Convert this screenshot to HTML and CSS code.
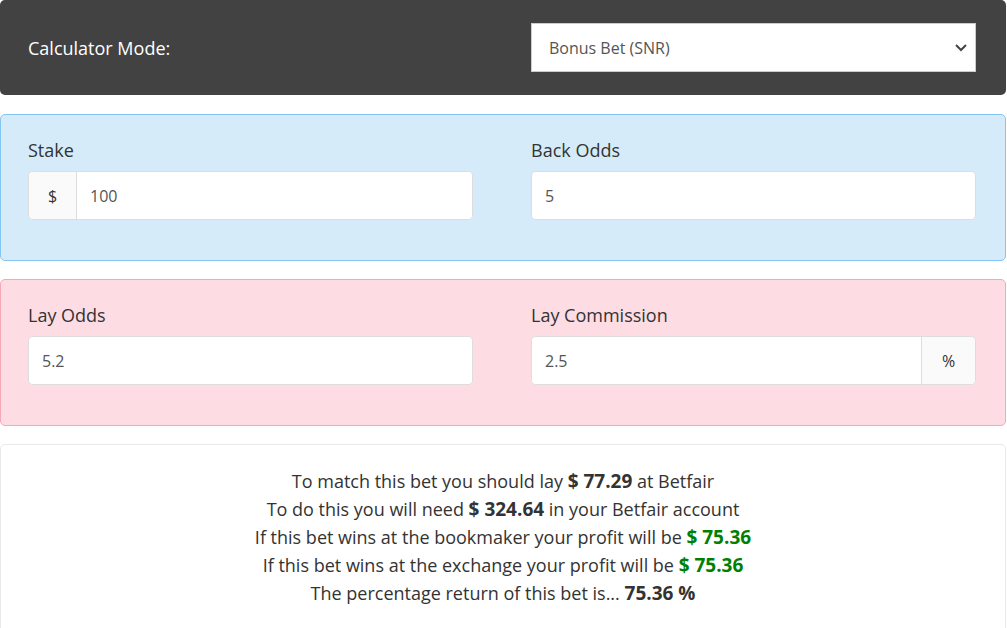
FILE: index.html
```html
<!DOCTYPE html>
<html lang="en">
<head>
  <meta charset="UTF-8">
  <meta name="viewport" content="width=device-width, initial-scale=1.0">
  <title>Matched Betting Calculator</title>
  <link rel="stylesheet" href="styles.css">
</head>
<body>
  <div class="panel mode">
    <label class="mode-label" for="mode">Calculator Mode:</label>
    <div class="select-wrap">
      <select id="mode">
        <option>Bonus Bet (SNR)</option>
        <option>Normal Bet</option>
        <option>Bonus Bet (SR)</option>
      </select>
      <svg class="chevron" width="14" height="9" viewBox="0 0 14 9"><path d="M2 2l5 5 5-5" fill="none" stroke="#444" stroke-width="2"/></svg>
    </div>
  </div>

  <div class="panel back">
    <div class="field">
      <label>Stake</label>
      <div class="group">
        <span class="addon">$</span>
        <input type="text" value="100">
      </div>
    </div>
    <div class="field">
      <label>Back Odds</label>
      <div class="group">
        <input type="text" value="5">
      </div>
    </div>
  </div>

  <div class="panel lay">
    <div class="field">
      <label>Lay Odds</label>
      <div class="group">
        <input type="text" value="5.2">
      </div>
    </div>
    <div class="field">
      <label>Lay Commission</label>
      <div class="group">
        <input type="text" value="2.5">
        <span class="addon">%</span>
      </div>
    </div>
  </div>

  <div class="result">
    <p>To match this bet you should lay <b>$ 77.29</b> at Betfair</p>
    <p>To do this you will need <b>$ 324.64</b> in your Betfair account</p>
    <p>If this bet wins at the bookmaker your profit will be <b class="win">$ 75.36</b></p>
    <p>If this bet wins at the exchange your profit will be <b class="win">$ 75.36</b></p>
    <p>The percentage return of this bet is... <b>75.36 %</b></p>
  </div>
</body>
</html>
```

FILE: styles.css
```css
* { box-sizing: border-box; }

body {
  margin: 0;
  width: 1006px;
  font-family: "Open Sans", Arial, sans-serif;
  font-size: 18px;
  color: #333;
  background: #fff;
}

.panel {
  display: grid;
  grid-template-columns: 1fr 1fr;
  column-gap: 58px;
  padding: 21px 29px 40px 27px;
  border-radius: 5px;
  border: 1px solid transparent;
  margin-bottom: 18px;
}

.mode {
  background: #424242;
  border: none;
  padding: 23px 30px 23px 28px;
  margin-bottom: 19px;
  align-items: center;
}

.mode-label {
  color: #fff;
  font-size: 18px;
}

.select-wrap {
  position: relative;
}

select {
  display: block;
  width: 100%;
  height: 49px;
  padding: 0 40px 0 17px;
  border: 1px solid #ccc;
  border-radius: 0;
  background: #fff;
  appearance: none;
  font-family: inherit;
  font-size: 16px;
  color: #555;
}

.chevron {
  position: absolute;
  right: 8px;
  top: 20px;
}

.back {
  background: #d6ebf9;
  border-color: #84c5f1;
}

.lay {
  background: #fddde3;
  border-color: #f5a9b8;
}

.field label {
  display: block;
  font-size: 18px;
  line-height: 28px;
  margin-bottom: 7px;
}

.group {
  display: flex;
  height: 49px;
  border: 1px solid #ddd;
  border-radius: 5px;
  background: #fff;
  overflow: hidden;
}

.group input {
  flex: 1;
  min-width: 0;
  border: none;
  padding: 0 13px;
  font-family: inherit;
  font-size: 16px;
  color: #555;
  background: #fff;
}

.addon {
  display: flex;
  align-items: center;
  justify-content: center;
  width: 48px;
  background: #fafafa;
  font-size: 16px;
}

.group .addon:first-child { border-right: 1px solid #ddd; }
.group .addon:last-child { border-left: 1px solid #ddd; width: 54px; }

.result {
  border: 1px solid #e9e9e9;
  border-radius: 5px;
  padding: 22px 0 30px;
  text-align: center;
  font-size: 18px;
  line-height: 28px;
}

.result p { margin: 0; }

.result b { font-size: 19px; }

.win { color: #008000; }
```
